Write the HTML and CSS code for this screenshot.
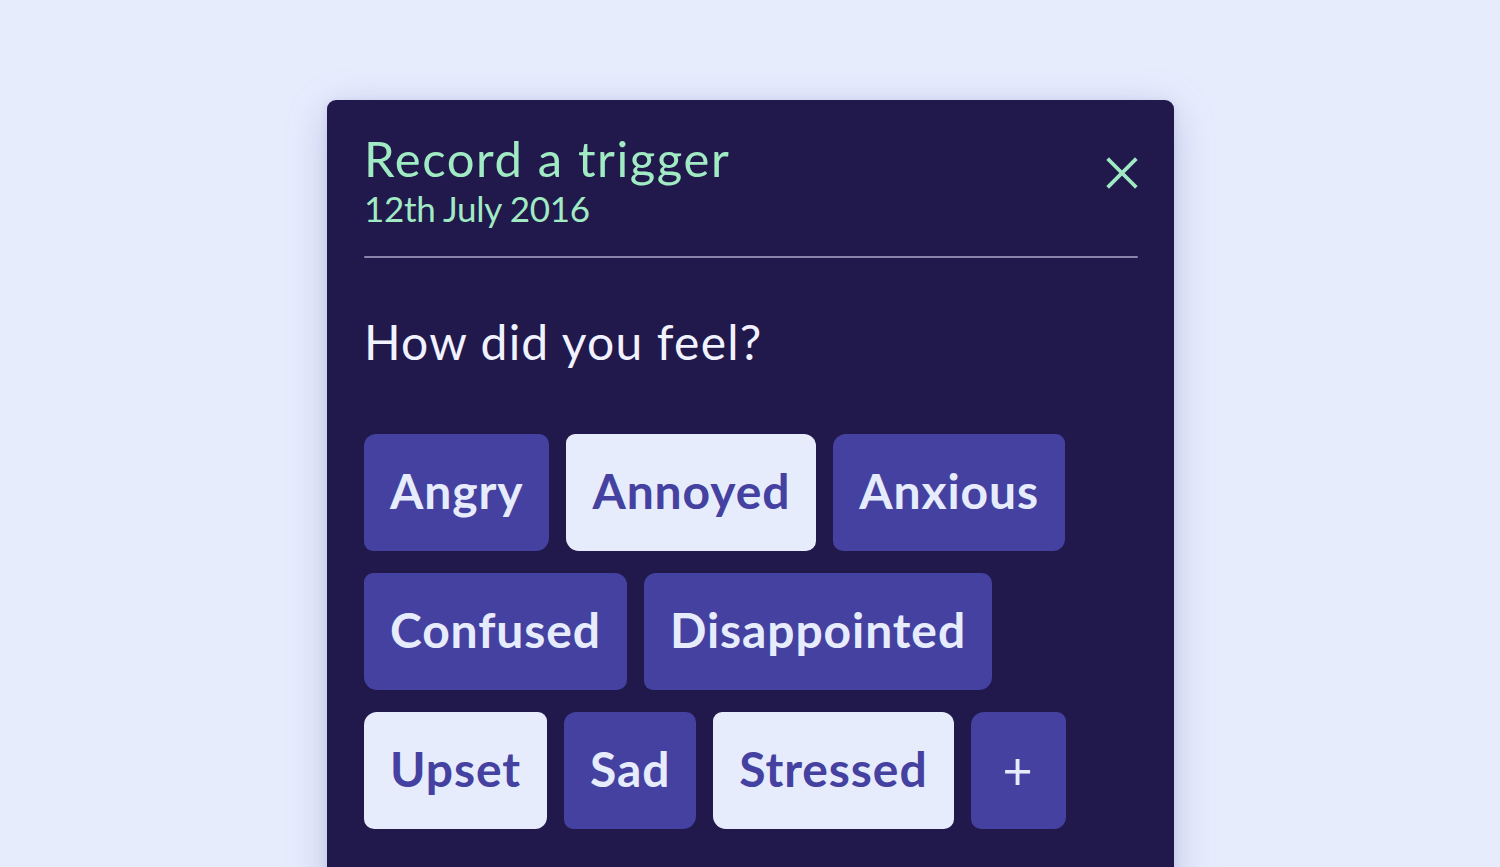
FILE: index.html
```html
<!DOCTYPE html>
<html lang="en">
<head>
<meta charset="utf-8">
<title>Record a trigger</title>
<link rel="stylesheet" href="styles.css">
</head>
<body>
<main class="stage">
  <section class="card">
    <header class="card-head">
      <div class="titles">
        <h1 class="title">Record a trigger</h1>
        <p class="date">12th July 2016</p>
      </div>
      <button class="close" aria-label="Close">
        <svg width="32" height="32" viewBox="0 0 32 32"><path d="M3 3 L29 29 M29 3 L3 29" stroke="#9fe9c3" stroke-width="3.8" stroke-linecap="square" fill="none"/></svg>
      </button>
    </header>
    <div class="divider"></div>
    <h2 class="question">How did you feel?</h2>
    <div class="chips">
      <span class="chip dark tilt-a">Angry</span>
      <span class="chip light tilt-b">Annoyed</span>
      <span class="chip dark tilt-c">Anxious</span>
      <span class="chip dark tilt-b">Confused</span>
      <span class="chip dark tilt-a">Disappointed</span>
      <span class="chip light tilt-c">Upset</span>
      <span class="chip dark tilt-a">Sad</span>
      <span class="chip light tilt-b">Stressed</span>
      <span class="chip dark plus tilt-c">+</span>
    </div>
  </section>
</main>
</body>
</html>
```
FILE: styles.css
```css
* { box-sizing: border-box; }
html, body { margin: 0; padding: 0; }
body {
  background: #e7ecfd;
  font-family: Lato, "Open Sans", sans-serif;
  width: 1500px;
  height: 867px;
  overflow: hidden;
}
.stage {
  display: flex;
  justify-content: center;
  padding-top: 100px;
}
.card {
  width: 847px;
  height: 800px;
  margin-left: 1px;
  background: #21184b;
  border-radius: 9px;
  box-shadow: 0 10px 40px rgba(90, 100, 170, 0.28), 0 2px 8px rgba(90, 100, 170, 0.15);
  padding: 30px 36px 0 37px;
}
.card-head {
  display: flex;
  justify-content: space-between;
  align-items: flex-start;
}
.title {
  margin: 0;
  color: #a0ebc4;
  font-weight: 400;
  font-size: 49px;
  line-height: 56px;
  letter-spacing: 1.6px;
}
.date {
  margin: 0;
  color: #a0ebc4;
  font-size: 35px;
  line-height: 44px;
  letter-spacing: -0.3px;
}
.close {
  background: none;
  border: 0;
  padding: 0;
  margin: 27px 0 0 0;
  width: 32px;
  height: 32px;
}
.close svg { display: block; }
.divider {
  height: 2px;
  background: #8a84ab;
  margin-top: 26px;
  border-radius: 1px;
}
.question {
  margin: 56px 0 0 0;
  color: #f1f2ff;
  font-weight: 400;
  font-size: 48px;
  line-height: 56px;
  letter-spacing: 1.2px;
}
.chips {
  display: flex;
  flex-wrap: wrap;
  column-gap: 17px;
  row-gap: 22px;
  margin-top: 64px;
  width: 720px;
}
.chip {
  display: flex;
  align-items: center;
  justify-content: center;
  height: 117px;
  padding: 0 26px 4px;
  border-radius: 11px;
  font-size: 48px;
  font-weight: 700;
  letter-spacing: 0.9px;
}
.chip.dark { background: #4441a0; color: #e7ecfd; }
.chip.light { background: #e7ecfd; color: #4441a0; }
.chip.plus { padding: 0 32px 2px; font-weight: 400; font-size: 52px; }
.tilt-a { border-radius: 12px 10px 13px 9px; }
.tilt-b { border-radius: 9px 12px 10px 13px; }
.tilt-c { border-radius: 13px 9px 12px 10px; }
```
